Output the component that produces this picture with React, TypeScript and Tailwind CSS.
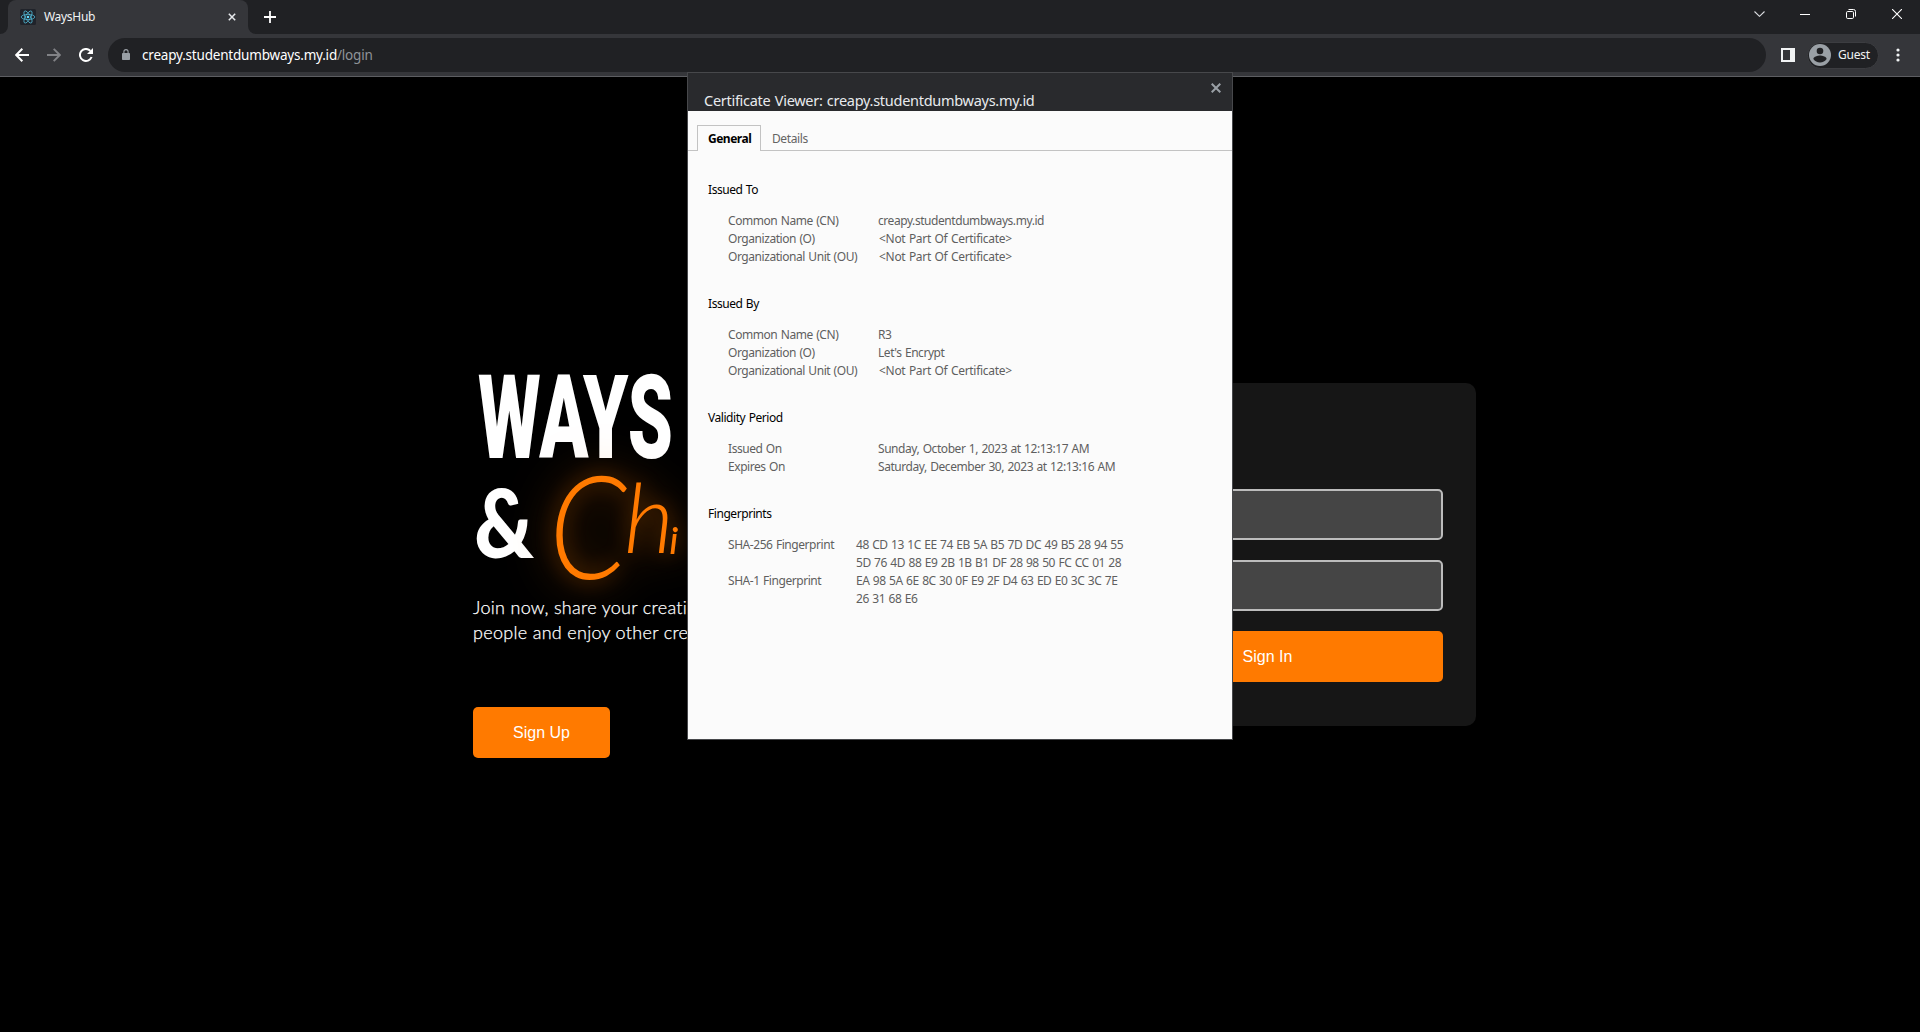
import React from "react";

const ui = "font-['Noto_Sans','Open_Sans',sans-serif]";

function TabStrip() {
  return (
    <div className="flex h-[34px] bg-[#202124]">
      <div className="flex h-[34px] w-2 bg-[#35363a]">
        <div className="h-full w-full rounded-br-lg bg-[#202124]" />
      </div>
      <div className="flex h-[34px] w-[240px] items-center rounded-t-lg bg-[#35363a] pr-[10px] pl-3">
        <svg className="h-4 w-4" viewBox="0 0 16 16" fill="none" stroke="#4fb3cf" strokeWidth="0.8">
          <rect width="16" height="16" rx="1.5" fill="#20232a" stroke="none" />
          <ellipse cx="8" cy="8" rx="6.8" ry="2.6" />
          <ellipse cx="8" cy="8" rx="6.8" ry="2.6" transform="rotate(60 8 8)" />
          <ellipse cx="8" cy="8" rx="6.8" ry="2.6" transform="rotate(120 8 8)" />
          <circle cx="8" cy="8" r="1.3" fill="#61dafb" stroke="none" />
        </svg>
        <span className="ml-2 text-[12px] tracking-[-0.3px] text-[#f1f3f4]">WaysHub</span>
        <svg className="mr-[2px] ml-auto h-[8px] w-[8px]" viewBox="0 0 9 9" stroke="#e8eaed" strokeWidth="1.7">
          <path d="M.9 .9 8.1 8.1M8.1 .9 .9 8.1" />
        </svg>
      </div>
      <div className="flex h-[34px] w-2 bg-[#35363a]">
        <div className="h-full w-full rounded-bl-lg bg-[#202124]" />
      </div>
      <svg className="mt-[11px] ml-2 h-3 w-3" viewBox="0 0 12 12" stroke="#fff" strokeWidth="1.8">
        <path d="M6 0v12M0 6h12" />
      </svg>
      <div className="ml-auto flex h-7 items-center pr-[18px]">
        <svg className="h-[6px] w-[11px]" viewBox="0 0 11 6" fill="none" stroke="#dadce0" strokeWidth="1.1">
          <path d="M.5 .5 5.5 5.3 10.5 .5" />
        </svg>
        <div className="ml-[35px] h-px w-[10px] bg-white" />
        <svg className="ml-[36px] h-[10px] w-[10px]" viewBox="0 0 10 10" fill="none" stroke="#fff">
          <rect x=".5" y="2.5" width="7" height="7" rx="1.2" />
          <path d="M2.5 .5h5a2 2 0 0 1 2 2v5" />
        </svg>
        <svg className="ml-[36px] h-[10px] w-[10px]" viewBox="0 0 10 10" stroke="#fff" strokeWidth="1.1">
          <path d="M0 0 10 10M10 0 0 10" />
        </svg>
      </div>
    </div>
  );
}

function Toolbar() {
  return (
    <div className="flex h-[43px] items-center border-b border-[#5d5e62] bg-[#35363a] pl-[15px]">
      <svg className="h-[14px] w-[14px]" viewBox="0 0 14 14" fill="none" stroke="#fff" strokeWidth="2">
        <path d="M14 7H1.5M7.3 .8 1.2 7l6.1 6.2" />
      </svg>
      <svg className="ml-[18px] h-[14px] w-[14px]" viewBox="0 0 14 14" fill="none" stroke="#818286" strokeWidth="1.9">
        <path d="M0 7h12.5M6.7 .8 12.8 7l-6.1 6.2" />
      </svg>
      <svg className="ml-[18px] h-[14px] w-[14px]" viewBox="0 0 14 14" fill="none" stroke="#fff" strokeWidth="2">
        <path d="M12.6 9A6 6 0 1 1 11.4 2.9" />
        <path d="M14 0v6H8z" fill="#fff" stroke="none" />
      </svg>
      <div className="ml-[15px] flex h-[34px] w-[1658px] items-center rounded-full bg-[#202124] pl-[14px]">
        <svg className="-mt-[2px] h-[11px] w-[8px]" viewBox="0 0 8 11">
          <rect y="4" width="8" height="7" rx=".8" fill="#9aa0a6" />
          <path d="M1.9 4.5V2.7a2.1 2.1 0 0 1 4.2 0v1.8" fill="none" stroke="#9aa0a6" strokeWidth="1.1" />
        </svg>
        <span className="mt-px ml-[12px] text-[13.5px] tracking-[-0.2px] text-white">
          creapy.studentdumbways.my.id<span className="text-[#8f9399]">/login</span>
        </span>
      </div>
      <svg className="ml-[15px] h-[14px] w-[14px]" viewBox="0 0 14 14">
        <path fillRule="evenodd" d="M0 0h14v14H0zM2 2v10h7V2z" fill="#f1f3f4" />
      </svg>
      <div className="ml-3 flex h-[27px] w-[72px] items-center rounded-full border border-[#3c3d41] bg-[#202124] pl-[1px]">
        <svg className="h-[22px] w-[22px]" viewBox="0 0 22 22">
          <circle cx="11" cy="11" r="11" fill="#9aa0a6" />
          <circle cx="11" cy="7" r="3.3" fill="#202124" />
          <path d="M4.4 15c0-2.2 4.4-3.4 6.6-3.4s6.6 1.2 6.6 3.4c-1.4 2.100-3.800 3.500-6.600 3.500S5.800 17.100 4.400 15z" fill="#202124" />
        </svg>
        <span className="ml-[7px] text-[12px] tracking-[-0.25px] text-[#f1f3f4]">Guest</span>
      </div>
      <svg className="ml-[17px] h-[14px] w-[4px]" viewBox="0 0 4 14" fill="#f1f3f4">
        <circle cx="2" cy="2" r="1.6" />
        <circle cx="2" cy="7" r="1.6" />
        <circle cx="2" cy="12" r="1.6" />
      </svg>
    </div>
  );
}

function Logo() {
  return (
    <svg className="block h-[250px] w-[230px] overflow-visible" viewBox="473 350 230 250">
      <text x="478" y="457.500" fontFamily="Roboto" fontWeight="900" fontSize="117" fill="#fff" textLength="195" lengthAdjust="spacingAndGlyphs">WAYS</text>
      <text x="474" y="557.500" fontFamily="Lato" fontWeight="900" fontSize="95" fill="#fff" textLength="60" lengthAdjust="spacingAndGlyphs">&amp;</text>
      <g
        fontFamily="Lato"
        fontStyle="italic"
        fontWeight="300"
        fill="#ff7a00"
        className="[filter:drop-shadow(0_0_10px_#ff7a0059)_drop-shadow(0_0_22px_#ff7a0080)]"
      >
        <text x="549" y="579" fontSize="145" textLength="78" lengthAdjust="spacingAndGlyphs">C</text>
        <text x="624" y="553" fontSize="97">h</text>
        <text x="670" y="553" fontSize="36" stroke="#ff7a00" strokeWidth="2">i</text>
      </g>
    </svg>
  );
}

function LoginPage() {
  return (
    <main className="flex h-[955px] bg-black pl-[473px]">
      <section className="flex w-[586px] flex-col items-start pt-[273px]">
        <Logo />
        <p className="-mt-[5px] w-[400px] font-['Lato',sans-serif] text-[18px] leading-[25px] font-light tracking-[0.3px] whitespace-nowrap text-white [-webkit-text-stroke:0.25px_white]">
          Join now, share your creations with another
          <br />
          people and enjoy other creations.
        </p>
        <button className="mt-[62px] h-[51px] w-[137px] rounded-[5px] bg-[#ff7a00] font-['Liberation_Sans',sans-serif] text-[16px] text-white">
          Sign Up
        </button>
      </section>
      <section className="mt-[306px] flex h-[343px] w-[417px] flex-col gap-5 rounded-[10px] bg-[#161616] px-[33px] pt-[106px]">
        <div className="h-[51px] rounded-[5px] border-2 border-[#bcbcbc] bg-[#454545]" />
        <div className="h-[51px] rounded-[5px] border-2 border-[#bcbcbc] bg-[#454545]" />
        <button className="h-[51px] rounded-[5px] bg-[#ff7a00] font-['Liberation_Sans',sans-serif] text-[16px] text-white">
          Sign In
        </button>
      </section>
    </main>
  );
}

const sections = [
  {
    title: "Issued To",
    rows: [
      ["Common Name (CN)", "creapy.studentdumbways.my.id"],
      ["Organization (O)", "<Not Part Of Certificate>"],
      ["Organizational Unit (OU)", "<Not Part Of Certificate>"],
    ],
  },
  {
    title: "Issued By",
    rows: [
      ["Common Name (CN)", "R3"],
      ["Organization (O)", "Let's Encrypt"],
      ["Organizational Unit (OU)", "<Not Part Of Certificate>"],
    ],
  },
  {
    title: "Validity Period",
    rows: [
      ["Issued On", "Sunday, October 1, 2023 at 12:13:17 AM"],
      ["Expires On", "Saturday, December 30, 2023 at 12:13:16 AM"],
    ],
  },
];

const prints = [
  ["SHA-256 Fingerprint", "48 CD 13 1C EE 74 EB 5A B5 7D DC 49 B5 28 94 55"],
  ["", "5D 76 4D 88 E9 2B 1B B1 DF 28 98 50 FC CC 01 28"],
  ["SHA-1 Fingerprint", "EA 98 5A 6E 8C 30 0F E9 2F D4 63 ED E0 3C 3C 7E"],
  ["", "26 31 68 E6"],
];

function CertificateDialog() {
  return (
    <div className="absolute top-[72px] left-[687px] flex h-[668px] w-[546px] flex-col border border-[#47484b] bg-[#fbfbfb]">
      <div className="flex h-[38px] shrink-0 justify-between bg-[#292a2d] pr-[11px] pl-[16px]">
        <h2 className="pt-[17px] text-[14.5px] leading-[20px] tracking-[-0.28px] [word-spacing:0.8px] text-[#e8eaed]">
          Certificate Viewer: creapy.studentdumbways.my.id
        </h2>
        <svg className="mt-[10px] h-[10px] w-[10px]" viewBox="0 0 10 10" stroke="#9aa0a6" strokeWidth="2">
          <path d="M.7 .7 9.3 9.300M9.300 .7 .7 9.300" />
        </svg>
      </div>
      <div className="mt-[14px] flex h-[26px] shrink-0 text-[12px]">
        <div className="w-[9px] border-b border-[#c3c3c3]" />
        <div className="w-[64px] border border-b-0 border-[#c3c3c3] pt-[4px] pl-[10px] leading-[18px] font-bold tracking-[-0.5px] text-black">
          General
        </div>
        <div className="flex-1 border-b border-[#c3c3c3] pt-[5px] pl-[11px] leading-[18px] tracking-[-0.4px] text-[#646464]">
          Details
        </div>
      </div>
      <div className="flex flex-col gap-[29px] pt-[30px] pl-[20px] text-[12px] leading-[18px] tracking-[-0.44px] [word-spacing:0.7px] whitespace-nowrap text-[#5f5f5f]">
        {sections.map((s) => (
          <section key={s.title}>
            <h3 className="mb-[13px] text-black">{s.title}</h3>
            {s.rows.map(([k, v]) => (
              <div key={k} className="flex pl-5">
                <span className="w-[150px]">{k}</span>
                <span className={v.startsWith("<") ? "pl-px tracking-[-0.3px]" : ""}>{v}</span>
              </div>
            ))}
          </section>
        ))}
        <section>
          <h3 className="mb-[13px] text-black">Fingerprints</h3>
          {prints.map(([k, v]) => (
            <div key={v} className="flex pl-5">
              <span className="w-[128px]">{k}</span>
              <span>{v}</span>
            </div>
          ))}
        </section>
      </div>
    </div>
  );
}

export default function App() {
  return (
    <div className={`relative h-[1032px] w-[1920px] overflow-hidden bg-black ${ui}`}>
      <TabStrip />
      <Toolbar />
      <LoginPage />
      <CertificateDialog />
    </div>
  );
}
